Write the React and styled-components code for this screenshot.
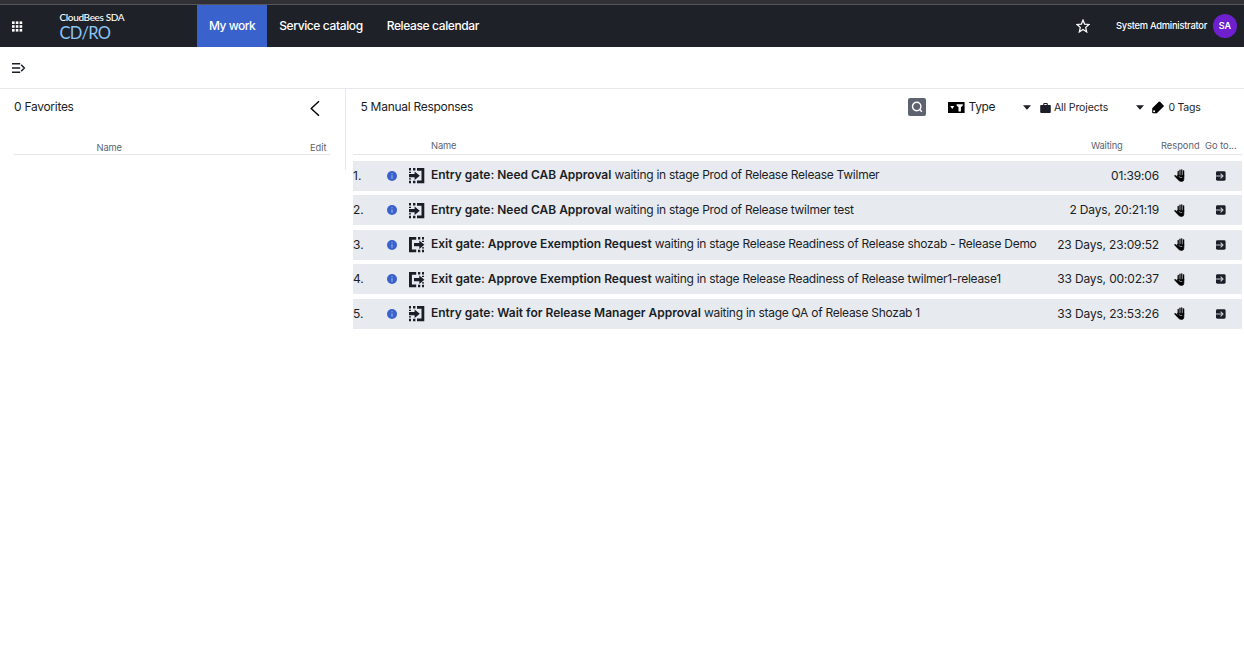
import React from "react";
import styled, { createGlobalStyle } from "styled-components";

const Global = createGlobalStyle`
  * { box-sizing: border-box; }
  body { margin: 0; background: #fff; color: #1b1e26; font-family: Inter, sans-serif; font-size: 12px; line-height: 16px; }
  svg { display: block; flex: none; }
`;

const Page = styled.div`
  display: flex;
  flex-direction: column;
  width: 1244px;
  height: 652px;
  overflow: hidden;
`;
const TopStrip = styled.div`
  height: 5px;
  background: #303035;
  border-bottom: 1px solid #55565a;
`;
const Header = styled.header`
  display: flex;
  align-items: center;
  height: 42px;
  padding: 0 7px 0 12px;
  background: #1e2128;
  color: #fff;
`;
const Brand = styled.div`
  width: 137.5px;
  margin: 0 0 1px 36.5px;
  font-family: Lato, sans-serif;
  white-space: nowrap;
`;
const BrandTop = styled.div`
  font-size: 10px;
  line-height: 13px;
  font-weight: 500;
  letter-spacing: -0.36px;
`;
const BrandName = styled.div`
  font-size: 16.5px;
  line-height: 18px;
  margin-bottom: -1px;
  letter-spacing: -0.7px;
  color: #8ac4f4;
`;
const Tab = styled.a`
  display: flex;
  align-items: center;
  height: 42px;
  padding: 0 12px;
  font-size: 12px;
  font-weight: 500;
  white-space: nowrap;
  letter-spacing: ${(p) => (p.$active ? -0.5 : -0.38)}px;
  background: ${(p) => (p.$active ? "#3a62cc" : "transparent")};
`;
const Spacer = styled.div`
  flex: 1;
`;
const UserName = styled.span`
  margin: 0 6px 0 26px;
  font-size: 9.3px;
  font-weight: 500;
  letter-spacing: -0.24px;
  white-space: nowrap;
`;
const Avatar = styled.span`
  display: grid;
  place-items: center;
  width: 24px;
  height: 24px;
  border-radius: 50%;
  background: #6e20cf;
  font-size: 9px;
  font-weight: 600;
`;
const Toolbar = styled.div`
  display: flex;
  align-items: center;
  height: 42px;
  padding-left: 12px;
  border-bottom: 1px solid #e6e8ed;
`;
const Content = styled.main`
  display: flex;
  align-items: flex-start;
`;
const Favorites = styled.section`
  width: 346px;
  height: 81px;
  padding: 0 15px 0 14px;
  border-right: 1px solid #e6e8ed;
`;
const Responses = styled.section`
  width: 898px;
  padding: 0 2px 0 7px;
`;
const TitleRow = styled.div`
  display: flex;
  align-items: center;
  height: 36px;
  padding-right: ${(p) => p.$right || 0}px;
  padding-left: ${(p) => p.$left || 0}px;
`;
const Title = styled.h2`
  flex: 1;
  margin: 0;
  font-size: 12px;
  font-weight: 400;
  letter-spacing: -0.28px;
`;
const Search = styled.button`
  display: grid;
  place-items: center;
  width: 18px;
  height: 18px;
  margin-right: ${(p) => p.$after}px;
  padding: 0;
  border: 0;
  border-radius: 2px;
  background: #5e6370;
`;
const Filter = styled.div`
  display: flex;
  align-items: center;
  width: ${(p) => p.$width}px;
  padding-top: ${(p) => p.$top || 0}px;
  gap: ${(p) => p.$gap}px;
  font-size: ${(p) => p.$size}px;
  letter-spacing: ${(p) => p.$spacing}px;
  white-space: nowrap;
`;
const Caret = styled.i`
  flex: none;
  width: 8px;
  height: 4.5px;
  margin-right: ${(p) => p.$after}px;
  background: #1b1e26;
  clip-path: polygon(0 0, 100% 0, 50% 100%);
`;
const Columns = styled.div`
  display: flex;
  align-items: flex-end;
  height: 30px;
  padding-bottom: ${(p) => p.$bottom || 0}px;
  border-bottom: 1px solid #e4e5ef;
  color: #5e6370;
  font-size: 9.3px;
  line-height: ${(p) => (p.$bottom ? 14 : 13)}px;
  letter-spacing: -0.1px;
  white-space: nowrap;
`;
const Column = styled.span`
  width: ${(p) => p.$width}px;
  padding-left: ${(p) => p.$left || 0}px;
  letter-spacing: ${(p) => p.$spacing || 0}px;
`;
const List = styled.div`
  display: flex;
  flex-direction: column;
  gap: 4.5px;
  padding-top: 5.8px;
`;
const Row = styled.div`
  display: flex;
  align-items: center;
  height: 30px;
  background: #e7eaef;
  white-space: nowrap;
`;
const Index = styled.span`
  width: 34px;
`;
const Gate = styled.span`
  width: 22px;
  margin-left: 12px;
  padding-top: 0.6px;
`;
const Message = styled.span`
  flex: 1;
  padding-bottom: 1.4px;
  letter-spacing: -0.27px;
  b { font-weight: 600; letter-spacing: -0.01px; }
`;
const Waiting = styled.span`
  margin-right: 15px;
  letter-spacing: -0.16px;
`;
const Action = styled.span`
  width: ${(p) => p.$width}px;
`;

const AppsIcon = () => (
  <svg width="11" height="11" viewBox="0 0 11 11" fill="#fff">
    {[0, 4, 8].map((y) => [0, 4, 8].map((x) => <rect key={`${x}${y}`} x={x * 0.95} y={y * 0.95 + 0.4} width="2.6" height="2.6" />))}
  </svg>
);
const StarIcon = () => (
  <svg width="14" height="14" viewBox="0 0 14 14" fill="none" stroke="#fff" strokeWidth="1.25">
    <path d="M7 1.1 8.6 5.1 13 5.5 9.7 8.4 10.7 12.9 7 10.5 3.3 12.9 4.3 8.4 1 5.5 5.4 5.1Z" />
  </svg>
);
const MenuIcon = () => (
  <svg width="14" height="10" viewBox="0 0 14 10" fill="none" stroke="#1b1e26" strokeWidth="1.5">
    <path d="M0 .8H8.2M0 5H8.2M0 9.2H8.2M9.2 1.8 12.3 5 9.2 8.2" />
  </svg>
);
const BackIcon = () => (
  <svg width="10" height="18" viewBox="0 0 10 18" fill="none" stroke="#000" strokeWidth="1.4">
    <path d="M9 3.2 1.2 10.5 9 17.8" />
  </svg>
);
const SearchIcon = () => (
  <svg width="12" height="12" viewBox="0 0 12 12" fill="none" stroke="#fff" strokeWidth="1.4">
    <circle cx="5.7" cy="5.5" r="4.2" />
    <path d="m8.2 8.1 2.6 2.7" />
  </svg>
);
const TypeIcon = () => (
  <svg width="17" height="11" viewBox="0 0 17 11">
    <path fill="#000" d="M0 0H16.6V11H0Z" />
    <path fill="#fff" d="M2.2 4.1H6.2L4.2 7ZM8.6 2.2H14.8V3.6L12.9 5.3V9.4H10.5V5.3L8.6 3.6Z" />
  </svg>
);
const CaseIcon = () => (
  <svg width="11" height="10" viewBox="0 0 11 10">
    <path fill="#1b1e26" d="M3.2 2V1Q3.2 0 4.2 0H6.8Q7.8 0 7.8 1V2H10Q10.8 2 10.8 2.8V9Q10.8 10 9.8 10H1.2Q.2 10 .2 9V2.8Q.2 2 1 2ZM4.3 2H6.7V1H4.3Z" />
  </svg>
);
const TagIcon = () => (
  <svg width="13" height="13" viewBox="0 0 13 13">
    <path fill="#000" fillRule="evenodd" d="M6.8.8Q7.4.2 8 .8L11.6 4.4Q12.2 5 11.6 5.6L4.8 12.2H.9Q.2 12.2.2 11.5V7.2ZM2.1 9.3A1 1 0 1 0 2.1 11.3 1 1 0 1 0 2.1 9.3Z" />
  </svg>
);
const InfoIcon = () => (
  <svg width="10" height="10" viewBox="0 0 10 10">
    <circle cx="5" cy="5" r="5" fill="#3a62cc" />
    <path d="M5 2.2V3.3M5 4.3V7.8" stroke="#8fa7e4" strokeWidth="1.3" />
  </svg>
);
const EntryIcon = () => (
  <svg width="16" height="16" viewBox="0 0 16 16" fill="#1b1e26">
    <path d="M8 0H15.3V15.3H8V12.6H12.5V2.7H8ZM0 0H2V2.5H0ZM4 0H6.4V2.5H4ZM0 3.7H2V5H0ZM0 10.3H2V11.6H0ZM0 12.8H2V15.3H0ZM4 12.8H6.4V15.3H4ZM0 6H5.6V3.5L10.8 7.7 5.6 11.9V9.2H0Z" />
  </svg>
);
const ExitIcon = () => (
  <svg width="16" height="16" viewBox="0 0 16 16" fill="#1b1e26">
    <path d="M0 0H7.2V2.7H2.9V12.6H7.2V15.3H0ZM9 0H11.3V2.5H9ZM13 0H15V2.5H13ZM13 3.7H15V5H13ZM13 10.3H15V11.6H13ZM9 12.8H11.3V15.3H9ZM13 12.8H15V15.3H13ZM5 6H10.3V3.5L15.4 7.7 10.3 11.9V9.2H5Z" />
  </svg>
);
const HandIcon = () => (
  <svg width="11" height="13" viewBox="0 0 11 13" fill="none" stroke="#000" strokeLinecap="round">
    <path strokeWidth="1.3" d="M4.2 7V2.4M6 6V1.1M7.8 6V.8M9.6 7V1.8" />
    <path fill="#000" strokeWidth=".8" strokeLinejoin="round" d="M3.9 6.4H9.8V10.2Q9.8 12.4 7.6 12.4 5.4 12.4 3.9 10.5L.5 6.7Q1.7 5.9 3.6 8.1Z" />
    <path stroke="#e7eaef" strokeWidth=".6" d="M5 7.7Q6.4 9 7.8 8.6" />
  </svg>
);
const GoIcon = () => (
  <svg width="10" height="10" viewBox="0 0 10 10">
    <rect y=".3" width="9.6" height="9.4" rx="1.4" fill="#1b1e26" />
    <path d="M0 5H6.6M4.6 2.7 7 5 4.6 7.3" fill="none" stroke="#c9ccd2" strokeWidth="1.1" />
  </svg>
);

const rows = [
  { kind: "entry", gate: "Entry gate: Need CAB Approval", text: "waiting in stage Prod of Release Release Twilmer", time: "01:39:06" },
  { kind: "entry", gate: "Entry gate: Need CAB Approval", text: "waiting in stage Prod of Release twilmer test", time: "2 Days, 20:21:19" },
  { kind: "exit", gate: "Exit gate: Approve Exemption Request", text: "waiting in stage Release Readiness of Release shozab - Release Demo", time: "23 Days, 23:09:52" },
  { kind: "exit", gate: "Exit gate: Approve Exemption Request", text: "waiting in stage Release Readiness of Release twilmer1-release1", time: "33 Days, 00:02:37" },
  { kind: "entry", gate: "Entry gate: Wait for Release Manager Approval", text: "waiting in stage QA of Release Shozab 1", time: "33 Days, 23:53:26" },
];

export default function App() {
  return (
    <Page>
      <Global />
      <TopStrip />
      <Header>
        <AppsIcon />
        <Brand>
          <BrandTop>CloudBees SDA</BrandTop>
          <BrandName>CD/RO</BrandName>
        </Brand>
        <Tab $active>My work</Tab>
        <Tab>Service catalog</Tab>
        <Tab>Release calendar</Tab>
        <Spacer />
        <StarIcon />
        <UserName>System Administrator</UserName>
        <Avatar>SA</Avatar>
      </Header>
      <Toolbar><MenuIcon /></Toolbar>
      <Content>
        <Favorites>
          <TitleRow $right={10}>
            <Title>0 Favorites</Title>
            <BackIcon />
          </TitleRow>
          <Columns>
            <Column $width={296} $left={82.5} $spacing={-0.1}>Name</Column>
            <Column $width={20}>Edit</Column>
          </Columns>
        </Favorites>
        <Responses>
          <TitleRow $left={7.5}>
            <Title>5 Manual Responses</Title>
            <Search aria-label="Search" $after={22}><SearchIcon /></Search>
            <Filter $width={75} $gap={3.5} $size={12} $spacing={-0.35}><TypeIcon />Type</Filter>
            <Filter $width={113} $gap={3.5} $size={10.5} $spacing={-0.12} $top={1}><Caret $after={5} /><CaseIcon />All Projects</Filter>
            <Filter $width={106} $gap={3.5} $size={10.5} $spacing={-0.25} $top={1}><Caret $after={4.5} /><TagIcon />0 Tags</Filter>
          </TitleRow>
          <Columns $bottom={1}>
            <Column $width={738} $left={78} $spacing={-0.1}>Name</Column>
            <Column $width={70} $spacing={-0.15}>Waiting</Column>
            <Column $width={44}>Respond</Column>
            <Column $width={37}>Go to...</Column>
          </Columns>
          <List>
            {rows.map((row, i) => (
              <Row key={i}>
                <Index>{i + 1}.</Index>
                <InfoIcon />
                <Gate>{row.kind === "entry" ? <EntryIcon /> : <ExitIcon />}</Gate>
                <Message><b>{row.gate}</b> {row.text}</Message>
                <Waiting>{row.time}</Waiting>
                <Action $width={42}><HandIcon /></Action>
                <Action $width={26}><GoIcon /></Action>
              </Row>
            ))}
          </List>
        </Responses>
      </Content>
    </Page>
  );
}
